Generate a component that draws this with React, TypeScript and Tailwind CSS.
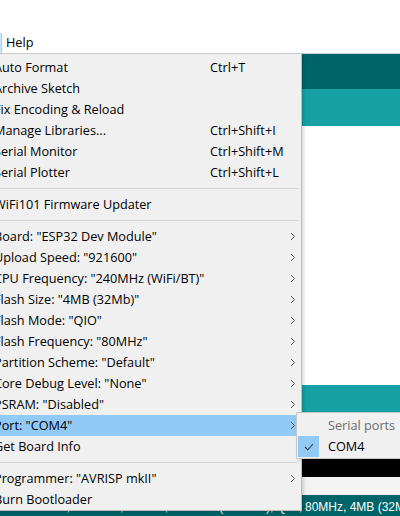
import React from 'react';

type Item =
  | { kind: 'item'; label: string; shortcut?: string; sub?: boolean; active?: boolean }
  | { kind: 'sep' };

const items: Item[] = [
  { kind: 'item', label: 'Auto Format', shortcut: 'Ctrl+T' },
  { kind: 'item', label: 'Archive Sketch' },
  { kind: 'item', label: 'Fix Encoding & Reload' },
  { kind: 'item', label: 'Manage Libraries...', shortcut: 'Ctrl+Shift+I' },
  { kind: 'item', label: 'Serial Monitor', shortcut: 'Ctrl+Shift+M' },
  { kind: 'item', label: 'Serial Plotter', shortcut: 'Ctrl+Shift+L' },
  { kind: 'sep' },
  { kind: 'item', label: 'WiFi101 Firmware Updater' },
  { kind: 'sep' },
  { kind: 'item', label: 'Board: "ESP32 Dev Module"', sub: true },
  { kind: 'item', label: 'Upload Speed: "921600"', sub: true },
  { kind: 'item', label: 'CPU Frequency: "240MHz (WiFi/BT)"', sub: true },
  { kind: 'item', label: 'Flash Size: "4MB (32Mb)"', sub: true },
  { kind: 'item', label: 'Flash Mode: "QIO"', sub: true },
  { kind: 'item', label: 'Flash Frequency: "80MHz"', sub: true },
  { kind: 'item', label: 'Partition Scheme: "Default"', sub: true },
  { kind: 'item', label: 'Core Debug Level: "None"', sub: true },
  { kind: 'item', label: 'PSRAM: "Disabled"', sub: true },
  { kind: 'item', label: 'Port: "COM4"', sub: true, active: true },
  { kind: 'item', label: 'Get Board Info' },
  { kind: 'sep' },
  { kind: 'item', label: 'Programmer: "AVRISP mkII"', sub: true },
  { kind: 'item', label: 'Burn Bootloader' },
];

const Chevron = () => (
  <svg width="6" height="9" viewBox="0 0 6 9" className="shrink-0">
    <polyline points="1,1 4.5,4.5 1,8" fill="none" stroke="#555" strokeWidth="1" />
  </svg>
);

const MenuRow: React.FC<{ item: Item }> = ({ item }) => {
  if (item.kind === 'sep') {
    return (
      <div className="h-[11px] flex items-center mr-[3px]">
        <div className="h-px w-full bg-[#d7d7d7]" />
      </div>
    );
  }
  return (
    <div
      className={`h-[21px] flex items-center mr-[3px] pl-[4px] pr-[2px] ${
        item.active ? 'bg-[#91c9f7]' : ''
      }`}
    >
      <span className="w-[216px] shrink-0 whitespace-nowrap">{item.label}</span>
      <span className="flex-1 whitespace-nowrap">{item.shortcut}</span>
      {item.sub && <Chevron />}
    </div>
  );
};

export default function App() {
  const font = { fontFamily: '"Open Sans", "Noto Sans", sans-serif' };
  return (
    <div
      className="relative w-[400px] h-[516px] overflow-hidden bg-white text-[12.7px] text-black"
      style={font}
    >
      {/* window top */}
      <div className="h-[33px] bg-white" />
      {/* menu bar */}
      <div className="h-[20px] flex items-center">
        <div className="w-[2px] h-full bg-[#cce8ff] border-r border-[#99d1ff]" />
        <span className="ml-[4px]">Help</span>
      </div>
      <div className="h-px bg-[#cccccc]" />

      {/* IDE body */}
      <div className="h-[35px] bg-[#006468]" />
      <div className="h-[37px] bg-[#17a1a5]" />
      <div className="h-[259px] bg-white" />
      <div className="h-[74px] bg-[#17a1a5]" />
      <div className="h-[18px] bg-black" />
      <div className="h-[18px] bg-[#f3f3f3]" />
      <div
        className="h-[21px] bg-[#006468] flex items-start pt-[3px] text-white text-[12px] whitespace-nowrap"
        style={{ fontFamily: '"Liberation Sans", Arial, sans-serif' }}
      >
        <div className="w-[302px] shrink-0 overflow-hidden flex justify-end">
          <span className="shrink-0">ESP32 Dev Module, Disabled, Default, 240MHz (WiFi/BT), QIO,</span>
        </div>
        <span className="ml-[3px]">80MHz, 4MB (32Mb), 921600, None on COM4</span>
      </div>

      {/* Tools dropdown */}
      <div className="absolute left-[-10px] top-[54px] w-[312px] h-[457px] bg-[#f0f0f0] border-r border-b border-[#bdbdbd] pt-[3px] shadow-[2px_2px_3px_rgba(0,0,0,0.15)]">
        {items.map((it, i) => (
          <MenuRow key={i} item={it} />
        ))}
      </div>

      {/* Port submenu */}
      <div className="absolute left-[296px] top-[412px] w-[130px] h-[47px] bg-[#f0f0f0] border border-[#c8c8c8] py-[2px] shadow-[2px_2px_3px_rgba(0,0,0,0.15)]">
        <div className="h-[21px] flex items-center">
          <span className="ml-[31px] text-[#6d6d6d]">Serial ports</span>
        </div>
        <div className="h-[21px] flex items-center">
          <div className="ml-[1px] w-[21px] h-[21px] bg-[#91c9f7] flex items-center justify-center">
            <svg width="10" height="8" viewBox="0 0 10 8">
              <polyline points="1,4 3.8,6.8 9,1" fill="none" stroke="#333" strokeWidth="1.1" />
            </svg>
          </div>
          <span className="ml-[9px]">COM4</span>
        </div>
      </div>
    </div>
  );
}
